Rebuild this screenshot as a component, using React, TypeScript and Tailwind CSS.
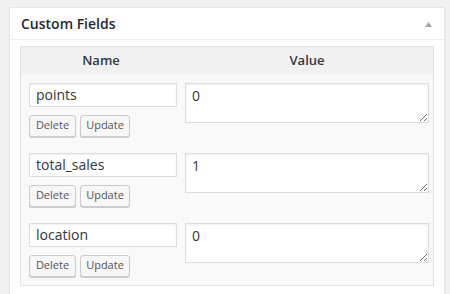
const fields = [
  { key: 'points', value: '0' },
  { key: 'total_sales', value: '1' },
  { key: 'location', value: '0' },
];

function FieldRow({ name, value }: { name: string; value: string }) {
  return (
    <tr className="align-top">
      <td className="w-[160px] pl-[8px] pr-[4px] pt-[8px] pb-[8px]">
        <input
          type="text"
          defaultValue={name}
          className="block w-[148px] h-[24px] border border-[#dddddd] bg-white px-[6px] text-[14px] text-[#32373c] shadow-[inset_0_1px_2px_rgba(0,0,0,0.07)] outline-none"
        />
        <div className="mt-[8px] flex gap-[4px]">
          <button className="h-[22px] w-[47px] rounded-[3px] border border-[#cccccc] bg-[#f7f7f7] text-[11px] text-[#555555] shadow-[0_1px_0_#cccccc]">
            Delete
          </button>
          <button className="h-[22px] w-[50px] rounded-[3px] border border-[#cccccc] bg-[#f7f7f7] text-[11px] text-[#555555] shadow-[0_1px_0_#cccccc]">
            Update
          </button>
        </div>
      </td>
      <td className="pl-[4px] pr-[3px] pt-[8px] pb-[8px]">
        <textarea
          defaultValue={value}
          className="block w-[244px] h-[40px] border border-[#dddddd] bg-white px-[6px] py-[2px] text-[14px] leading-[20px] text-[#32373c] shadow-[inset_0_1px_2px_rgba(0,0,0,0.07)] outline-none"
        />
      </td>
    </tr>
  );
}

export default function App() {
  return (
    <div
      className="w-[450px] h-[294px] overflow-hidden bg-[#f1f1f1] pl-[9px] pt-[7px]"
      style={{ fontFamily: '"Open Sans", "Liberation Sans", sans-serif' }}
    >
      <div className="w-[436px] h-[300px] border border-[#e5e5e5] bg-white shadow-[0_1px_1px_rgba(0,0,0,0.04)]">
        <div className="flex h-[32px] items-center justify-between border-b border-[#eeeeee] pl-[11px] pr-[12px]">
          <h2 className="text-[14px] font-semibold text-[#23282d]">Custom Fields</h2>
          <svg width="7" height="5" viewBox="0 0 7 5" className="mt-[1px]">
            <polygon points="3.5,0 7,5 0,5" fill="#a0a5aa" />
          </svg>
        </div>
        <div className="px-[10px] pt-[6px]">
          <table className="w-[414px] border border-[#e1e1e1] bg-[#f9f9f9] border-collapse">
            <thead>
              <tr className="h-[28px] bg-[#f1f1f1] text-[13px] font-semibold text-[#32373c]">
                <th className="w-[160px] text-center font-semibold">Name</th>
                <th className="text-center font-semibold">Value</th>
              </tr>
            </thead>
            <tbody>
              {fields.map((f) => (
                <FieldRow key={f.key} name={f.key} value={f.value} />
              ))}
            </tbody>
          </table>
        </div>
      </div>
    </div>
  );
}
